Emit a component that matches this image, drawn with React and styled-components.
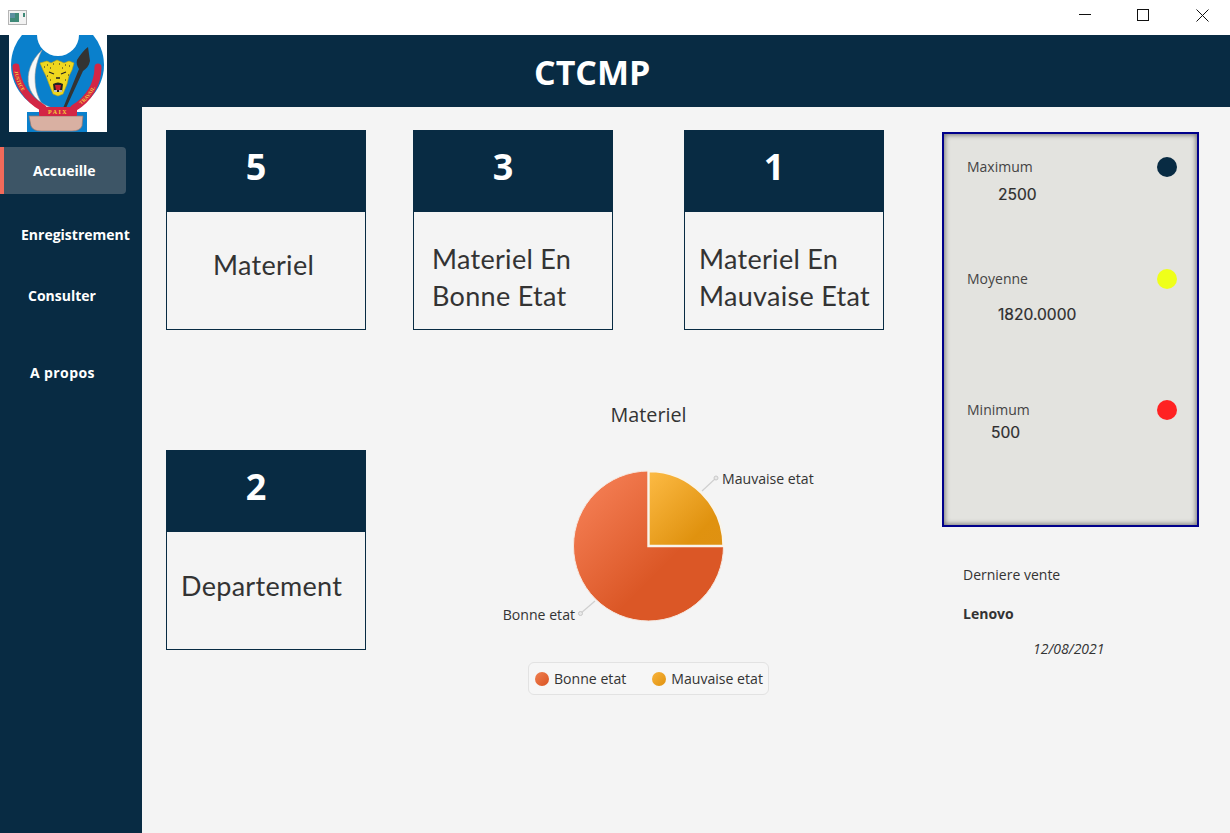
import React from "react";
import styled, { createGlobalStyle } from "styled-components";

const NAVY = "#082b43";
const UI = `"Open Sans", "Noto Sans", sans-serif`;

const Global = createGlobalStyle`
  * { box-sizing: border-box; }
  html, body { margin: 0; height: 100%; overflow: hidden; }
  body { font-family: ${UI}; background: #f4f4f4; color: #333; }
`;

const Page = styled.div`
  position: relative;
  width: 1230px;
  height: 833px;
  display: flex;
  flex-direction: column;
`;

const TitleBar = styled.div`
  height: 35px;
  flex: none;
  background: #fff;
  display: flex;
  align-items: center;
  justify-content: space-between;
  padding-left: 8px;
`;

const WinButtons = styled.div`
  display: flex;
`;

const WinButton = styled.button`
  width: 58px;
  height: 30px;
  margin-top: -5px;
  padding: 0;
  border: 0;
  background: transparent;
  display: flex;
  align-items: center;
  justify-content: center;
`;

const Header = styled.header`
  height: 72px;
  flex: none;
  background: ${NAVY};
  color: #fff;
  display: flex;
  align-items: center;
  padding: 2px 0 0 534px;
  font-size: 34px;
  font-weight: 700;
`;

const Logo = styled.svg`
  position: absolute;
  left: 9px;
  top: 35px;
  width: 98px;
  height: 97px;
`;

const Body = styled.div`
  flex: 1;
  display: flex;
  min-height: 0;
`;

const Sidebar = styled.nav`
  width: 142px;
  flex: none;
  background: ${NAVY};
  padding-top: 40px;
  display: flex;
  flex-direction: column;
  align-items: flex-start;
`;

const NavItem = styled.a`
  height: 47px;
  width: ${(p) => (p.$active ? "126px" : "142px")};
  margin-top: ${(p) => p.$top || 0}px;
  padding-left: ${(p) => p.$left}px;
  display: flex;
  align-items: center;
  color: #fff;
  font-size: 14px;
  font-weight: 700;
  letter-spacing: ${(p) => p.$spacing || 0}px;
  white-space: nowrap;
  background: ${(p) => (p.$active ? "#3d5566" : "transparent")};
  border-left: ${(p) => (p.$active ? "4px solid #f26a5a" : "0")};
  border-radius: ${(p) => (p.$active ? "0 4px 4px 0" : "0")};
`;

const Main = styled.main`
  flex: 1;
  padding: 23px 0 0 24px;
  display: grid;
  grid-template-columns: 247px 271px 258px 257px;
  grid-template-rows: 200px 70px 50px 200px;
  align-items: start;
  justify-items: start;
`;

const Card = styled.section`
  width: 200px;
  height: 200px;
  border: 1px solid ${NAVY};
  display: flex;
  flex-direction: column;
  grid-column: ${(p) => p.$col};
  grid-row: ${(p) => p.$row};
`;

const CardHead = styled.div`
  height: 82px;
  flex: none;
  margin: -1px -1px 0;
  background: ${NAVY};
  color: #fff;
  font-size: 36px;
  font-weight: 700;
  display: flex;
  align-items: center;
  justify-content: center;
  padding: 0 20px 10px 0;
`;

const CardBody = styled.div`
  flex: 1;
  font-family: "Lato", "Noto Sans", sans-serif;
  font-size: 27px;
  line-height: 37px;
  letter-spacing: 0.3px;
  color: #333;
  white-space: nowrap;
  padding-left: ${(p) => p.$left}px;
  padding-top: ${(p) => p.$top}px;
`;

const Chart = styled.div`
  grid-column: 2 / 4;
  grid-row: 3 / 5;
  width: 471px;
  display: flex;
  flex-direction: column;
  align-items: center;
`;

const ChartTitle = styled.div`
  height: 30px;
  line-height: 30px;
  font-size: 19.8px;
`;

const PieSvg = styled.svg`
  display: block;
  width: 471px;
  height: 232px;
  text {
    font-family: ${UI};
    font-size: 14.1px;
    fill: #333;
  }
`;

const Legend = styled.div`
  width: 241px;
  height: 33px;
  border: 1px solid #e2e2e2;
  border-radius: 6px;
  background: #f6f6f6;
  display: flex;
  align-items: center;
  gap: 26px;
  padding-left: 6px;
  font-size: 14.1px;
  white-space: nowrap;
`;

const LegendItem = styled.span`
  display: flex;
  align-items: center;
  gap: 5px;
`;

const Dot = styled.i`
  width: 14px;
  height: 14px;
  border-radius: 50%;
  background: ${(p) => p.$bg};
`;

const Aside = styled.aside`
  grid-column: 4;
  grid-row: 1 / 5;
  margin-top: 2px;
`;

const Panel = styled.div`
  width: 257px;
  height: 395px;
  border: 2px solid #00008b;
  background: #e3e3df;
  box-shadow: inset 0 0 5px 1px rgba(60, 60, 60, 0.65);
  padding: 23px 20px 0 23px;
`;

const Stat = styled.div`
  margin-top: ${(p) => p.$top || 0}px;
`;

const StatRow = styled.div`
  height: 20px;
  display: flex;
  align-items: center;
  justify-content: space-between;
  font-size: 14px;
  color: #444;
`;

const StatLabel = styled.span`
  padding-bottom: 2px;
`;

const StatDot = styled.span`
  width: 20px;
  height: 20px;
  border-radius: 50%;
  background: ${(p) => p.$bg};
`;

const StatValue = styled.div`
  height: 20px;
  line-height: 22px;
  margin-top: ${(p) => p.$top}px;
  padding-left: ${(p) => p.$left}px;
  font-family: "Inter", "Liberation Sans", sans-serif;
  font-size: 15.6px;
  font-weight: 400;
  color: #2e2e2e;
  -webkit-text-stroke: 0.2px #2e2e2e;
`;

const Sale = styled.div`
  margin-top: 38px;
  padding-left: 21px;
  font-size: 14px;
`;

const SaleLine = styled.div`
  height: 20px;
  line-height: 20px;
  margin-top: ${(p) => p.$top || 0}px;
  padding-left: ${(p) => p.$left || 0}px;
  font-weight: ${(p) => (p.$bold ? 700 : 400)};
  font-style: ${(p) => (p.$italic ? "italic" : "normal")};
  font-size: 14px;
`;

const AppIcon = () => (
  <svg width="19" height="15" viewBox="0 0 19 15">
    <rect x=".5" y=".5" width="18" height="14" fill="#f2f2f2" stroke="#b5b5b5" />
    <rect x="2" y="3" width="9" height="9" fill="#3f8a78" />
    <rect x="2" y="3" width="5" height="5" fill="#5b8fa0" />
    <rect x="15" y="3" width="2" height="4" fill="#3f8a78" />
  </svg>
);

const Emblem = () => (
  <Logo viewBox="9 35 98 97">
    <defs>
      <path id="rib-l" d="M16 68 C17 84 26 98 41 107" />
      <path id="rib-r" d="M75 107 C89 98 98 84 98 68" />
    </defs>
    <rect x="9" y="35" width="98" height="97" fill="#fff" />
    <circle cx="57.5" cy="65" r="46.5" fill="#0a80cc" />
    <rect x="9" y="18" width="98" height="17" fill="#fff" />
    <circle cx="58" cy="35" r="21" fill="#fff" />
    <rect x="27" y="112" width="60" height="20" fill="#0a80cc" />
    <path d="M42 50 C31 60 26 74 29 86 C32 97 41 104 52 108 L45 108 C38 99 35 90 35 78 C35 68 38 58 42 50Z" fill="#f8f8f8" stroke="#9a9a9a" strokeWidth=".6" />
    <path d="M88 47 L90 61 C89 66 86 69 83 71 L66 108 L63.5 107 L79 69 C77 66 76 63 77 60 C80 55 84 50 88 47Z" fill="#333" />
    <path d="M16 67 C17 84 27 99 43 108" fill="none" stroke="#d32645" strokeWidth="7" strokeLinecap="round" />
    <path d="M74 108 C89 99 98 84 98 67" fill="none" stroke="#d32645" strokeWidth="7" strokeLinecap="round" />
    <text fontFamily="Liberation Serif, serif" fontSize="5" fontWeight="700" fill="#f4d23a" dy="1.7">
      <textPath href="#rib-l" startOffset="3">JUSTICE</textPath>
    </text>
    <text fontFamily="Liberation Serif, serif" fontSize="5" fontWeight="700" fill="#f4d23a" dy="1.7">
      <textPath href="#rib-r" startOffset="6">TRAVAIL</textPath>
    </text>
    <path d="M40 63 L47 61 L51 63 L57 60 L64 63 L69 61 L74 63 L72 70 L69 76 L67 84 L63 94 L58 96 L53 94 L49 84 L46 76 L43 70Z" fill="#efd71f" stroke="#b9a417" strokeWidth=".6" />
    <path d="M49 72 L54 74 M61 74 L66 72 M56 78 H60" stroke="#222" strokeWidth="1.3" />
    <path d="M53 84 Q58 81 63 84 L62 92 H54Z" fill="#222" />
    <path d="M55 85 H61 L60 90 H56Z" fill="#c9202e" />
    <path d="M54 91 H57 M59 91 H62" stroke="#f4f4f4" strokeWidth="1.3" />
    <path d="M47 65h1M53 64h1M59 64h1M65 65h1M69 66h1M44 67h1M50 68h1M62 68h1M47 76h1M68 75h1M50 80h1M65 80h1" stroke="#222" strokeWidth="1" />
    <path d="M29 116 H83 L82 126 Q80 131 72 131 H41 Q33 131 31 126Z" fill="#d9b0a2" stroke="#99756c" strokeWidth=".7" />
    <rect x="39" y="107" width="38" height="9" rx="1" fill="#d32645" />
    <text x="58" y="114" textAnchor="middle" fontFamily="Liberation Serif, serif" fontSize="6" fontWeight="700" letterSpacing="1.4" fill="#f4d23a">PAIX</text>
  </Logo>
);

const Pie = () => (
  <PieSvg viewBox="413 430 471 232">
    <defs>
      <linearGradient id="pie-a" x1="0" y1="0" x2="1" y2="1">
        <stop offset="0" stopColor="#f9855c" />
        <stop offset=".62" stopColor="#db5726" />
        <stop offset="1" stopColor="#db5726" />
      </linearGradient>
      <linearGradient id="pie-b" x1="0" y1="0" x2="1" y2="1">
        <stop offset="0" stopColor="#fdbb45" />
        <stop offset=".75" stopColor="#e0920f" />
        <stop offset="1" stopColor="#df9112" />
      </linearGradient>
    </defs>
    <path d="M648.5 546 V471 A75 75 0 1 0 723.5 546 Z" fill="url(#pie-a)" stroke="#f6e8e0" strokeWidth="1" />
    <path d="M648.5 546 H723.5 A75 75 0 0 0 648.5 471 Z" fill="url(#pie-b)" stroke="#f8f4ec" strokeWidth="2.4" />
    <path d="M702 491 L716 478" stroke="#cfcfcf" strokeWidth="1.2" />
    <circle cx="716" cy="478" r="2" fill="#e8e8e8" stroke="#c8c8c8" />
    <path d="M595 601 L580.5 613.5" stroke="#cfcfcf" strokeWidth="1.2" />
    <circle cx="580.5" cy="613.5" r="2" fill="#e8e8e8" stroke="#c8c8c8" />
    <text x="722" y="484">Mauvaise etat</text>
    <text x="575" y="620" textAnchor="end">Bonne etat</text>
  </PieSvg>
);

export default function App() {
  return (
    <Page>
      <Global />
      <TitleBar>
        <AppIcon />
        <WinButtons>
          <WinButton aria-label="minimize">
            <svg width="12" height="12" viewBox="0 0 12 12"><path d="M0 5.5H12" stroke="#111" /></svg>
          </WinButton>
          <WinButton aria-label="maximize">
            <svg width="12" height="12" viewBox="0 0 12 12"><rect x=".5" y=".5" width="11" height="11" fill="none" stroke="#111" /></svg>
          </WinButton>
          <WinButton aria-label="close">
            <svg width="15" height="13" viewBox="0 0 15 13"><path d="M2.5 .5L14.5 12.5M14.5 .5L2.5 12.5" stroke="#111" /></svg>
          </WinButton>
        </WinButtons>
      </TitleBar>
      <Header>CTCMP</Header>
      <Emblem />
      <Body>
        <Sidebar>
          <NavItem $active $left={29}>Accueille</NavItem>
          <NavItem $top={17} $left={21}>Enregistrement</NavItem>
          <NavItem $top={14} $left={28}>Consulter</NavItem>
          <NavItem $top={30} $left={30} $spacing={0.4}>A propos</NavItem>
        </Sidebar>
        <Main>
          <Card $col={1} $row={1}>
            <CardHead>5</CardHead>
            <CardBody $left={46} $top={34}>Materiel</CardBody>
          </Card>
          <Card $col={2} $row={1}>
            <CardHead>3</CardHead>
            <CardBody $left={18} $top={28}>Materiel En<br />Bonne Etat</CardBody>
          </Card>
          <Card $col={3} $row={1}>
            <CardHead>1</CardHead>
            <CardBody $left={14} $top={28}>Materiel En<br />Mauvaise Etat</CardBody>
          </Card>
          <Card $col={1} $row={4}>
            <CardHead>2</CardHead>
            <CardBody $left={14} $top={35}>Departement</CardBody>
          </Card>
          <Chart>
            <ChartTitle>Materiel</ChartTitle>
            <Pie />
            <Legend>
              <LegendItem><Dot $bg="linear-gradient(135deg,#f08050,#d95322)" />Bonne etat</LegendItem>
              <LegendItem><Dot $bg="linear-gradient(135deg,#f8b33c,#e0920f)" />Mauvaise etat</LegendItem>
            </Legend>
          </Chart>
          <Aside>
            <Panel>
              <Stat>
                <StatRow><StatLabel>Maximum</StatLabel><StatDot $bg={NAVY} /></StatRow>
                <StatValue $top={7} $left={31}>2500</StatValue>
              </Stat>
              <Stat $top={65}>
                <StatRow><StatLabel>Moyenne</StatLabel><StatDot $bg="#efff1a" /></StatRow>
                <StatValue $top={15} $left={31}>1820.0000</StatValue>
              </Stat>
              <Stat $top={76}>
                <StatRow><StatLabel>Minimum</StatLabel><StatDot $bg="#ff2222" /></StatRow>
                <StatValue $top={2} $left={24}>500</StatValue>
              </Stat>
            </Panel>
            <Sale>
              <SaleLine>Derniere vente</SaleLine>
              <SaleLine $bold $top={19}>Lenovo</SaleLine>
              <SaleLine $italic $top={15} $left={70}>12/08/2021</SaleLine>
            </Sale>
          </Aside>
        </Main>
      </Body>
    </Page>
  );
}
